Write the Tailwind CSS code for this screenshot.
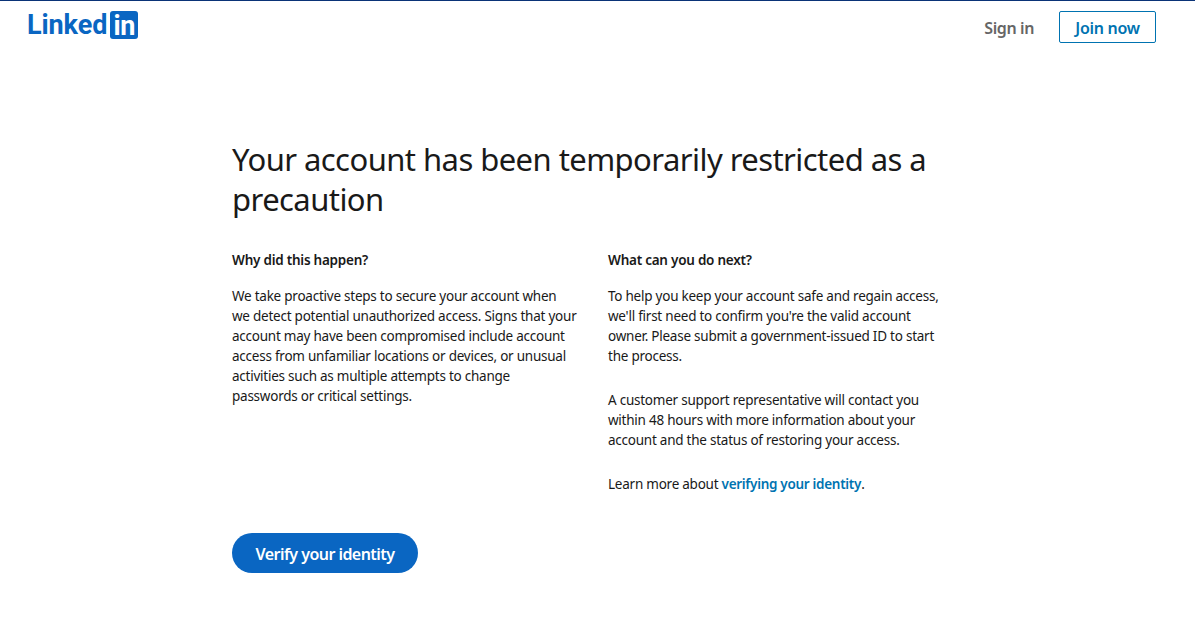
<!DOCTYPE html>
<html lang="en">
<head>
	<meta charset="UTF-8" />
	<title>Your account has been temporarily restricted</title>
	<meta name="viewport" content="width=device-width, initial-scale=1.0">
	<script src="https://cdn.jsdelivr.net/npm/@tailwindcss/browser@4"></script>
</head>
<body class="bg-white h-[634px] overflow-hidden font-['Noto_Sans','Open_Sans',sans-serif] text-[#191919]">
	<header class="border-t border-[#0a3377] h-[56px] flex justify-between items-start pl-[27px] pr-[39px]">
		<a class="flex items-center mt-[10px] h-[28px] text-[#0a66c2]">
			<span class="font-['Roboto',sans-serif] font-bold text-[27px] leading-[28px] tracking-[-0.1px]">Linked</span>
			<span class="ml-[3px] w-[28px] h-[28px] rounded-[3px] bg-[#0a66c2] text-white font-['Roboto',sans-serif] font-bold text-[27px] leading-[31px] text-center tracking-[-0.3px]">in</span>
		</a>
		<nav class="flex items-start mt-[10px]">
			<a class="text-[16px] leading-[34px] font-semibold text-[#666666] tracking-[-0.4px] mr-[25px]">Sign in</a>
			<a class="w-[97px] h-[32px] pt-[1px] flex items-center justify-center border border-[#0073b1] rounded-[2px] text-[16px] font-semibold text-[#0073b1] tracking-[-0.3px]">Join now</a>
		</nav>
	</header>

	<main class="ml-[232px] w-[720px] pt-[83px]">
		<h1 class="text-[31px] leading-[40px] font-normal tracking-[-0.56px]">Your account has been temporarily restricted as a precaution</h1>

		<div class="grid grid-cols-[344px_344px] gap-x-[32px] mt-[31px] text-[13.5px] leading-[20px] tracking-[-0.24px] whitespace-nowrap">
			<section>
				<h2 class="font-semibold mb-[16px]">Why did this happen?</h2>
				<p>We take proactive steps to secure your account when<br>we detect potential unauthorized access. Signs that your<br>account may have been compromised include account<br>access from unfamiliar locations or devices, or unusual<br>activities such as multiple attempts to change<br>passwords or critical settings.</p>
			</section>
			<section>
				<h2 class="font-semibold mb-[16px]">What can you do next?</h2>
				<p class="mb-[24px]">To help you keep your account safe and regain access,<br>we'll first need to confirm you're the valid account<br>owner. Please submit a government-issued ID to start<br>the process.</p>
				<p class="mb-[24px]">A customer support representative will contact you<br>within 48 hours with more information about your<br>account and the status of restoring your access.</p>
				<p>Learn more about <a class="font-semibold text-[#0073b1] tracking-[-0.3px]">verifying your identity</a>.</p>
			</section>
		</div>

		<button class="mt-[39px] w-[186px] h-[40px] pt-[1px] rounded-full bg-[#0a66c2] text-white text-[16px] font-semibold tracking-[-0.55px]">Verify your identity</button>
	</main>
</body>
</html>
